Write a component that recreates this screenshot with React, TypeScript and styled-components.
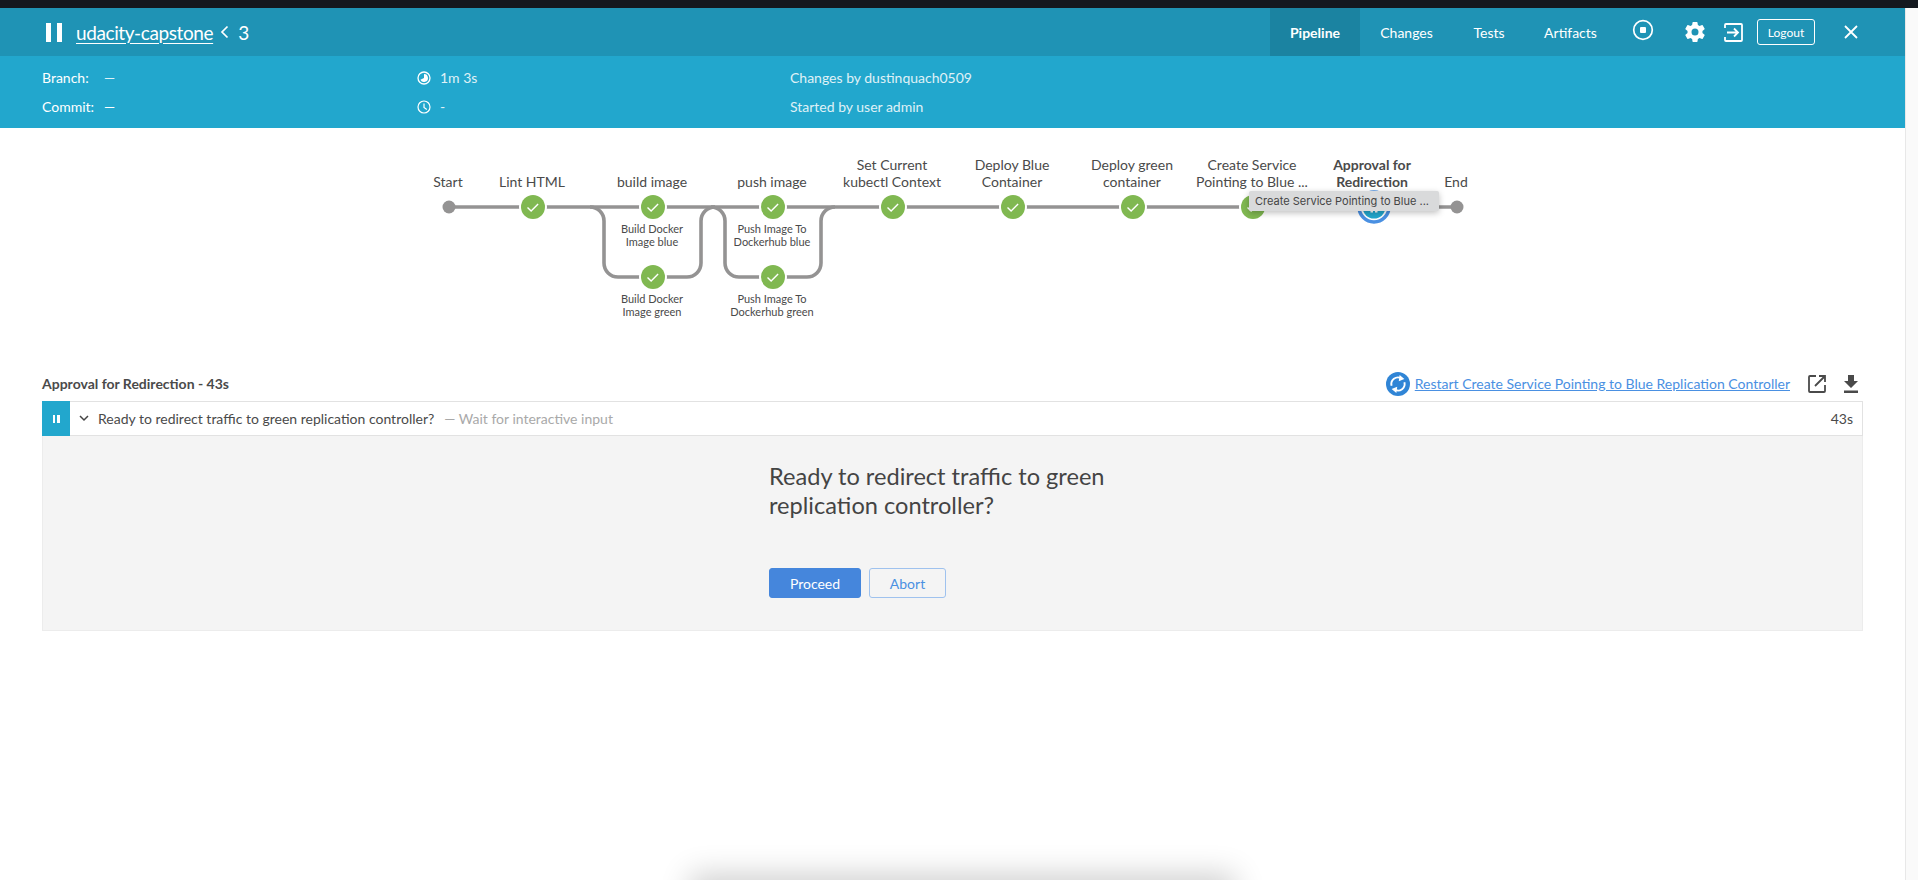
import React from "react";
import styled, { createGlobalStyle } from "styled-components";

const GlobalStyle = createGlobalStyle`
  html, body {
    margin: 0;
    padding: 0;
    height: 100%;
    background: #fff;
  }
  body {
    font-family: Lato, "Noto Sans", sans-serif;
    color: #4a4a4a;
    overflow: hidden;
  }
`;

const Page = styled.div`
  position: relative;
  width: 1918px;
  height: 880px;
  overflow: hidden;
  background: #fff;
  display: flex;
  flex-direction: column;
`;

const DesktopStrip = styled.div`
  height: 8px;
  flex: none;
  background: #14181f;
`;

const Main = styled.div`
  flex: 1;
  display: flex;
  min-height: 0;
`;

const Sheet = styled.div`
  width: 1905px;
  flex: none;
  display: flex;
  flex-direction: column;
`;

const ScrollGutter = styled.div`
  flex: 1;
  background: #fafafa;
  border-left: 1px solid #e8e8e8;
`;

const TopBar = styled.header`
  height: 48px;
  flex: none;
  background: #1f93b5;
  color: #fff;
  display: flex;
  align-items: stretch;
  padding-left: 46px;
`;

const Title = styled.div`
  display: flex;
  align-items: center;
  font-size: 19px;
  letter-spacing: -0.4px;
  flex: none;
  width: 1224px;
`;

const PauseGlyph = styled.span`
  display: inline-flex;
  gap: 6px;
  margin-right: 14px;
  i {
    display: block;
    width: 5px;
    height: 19px;
    background: #fff;
  }
`;

const TitleLink = styled.a`
  color: #fff;
  text-decoration: underline;
  text-underline-offset: 3px;
  text-decoration-thickness: 1px;
`;

const RunNumber = styled.span`
  display: inline-flex;
  align-items: center;
  gap: 9px;
  margin-left: 7px;
`;

const Tab = styled.a<{ $active?: boolean; $width: number }>`
  width: ${(p) => p.$width}px;
  flex: none;
  display: flex;
  align-items: center;
  justify-content: center;
  font-size: 14px;
  font-weight: ${(p) => (p.$active ? 700 : 400)};
  background: ${(p) => (p.$active ? "#1b83a1" : "transparent")};
`;

const Actions = styled.div`
  display: flex;
  align-items: center;
  margin-left: 16px;
`;

const IconSlot = styled.span<{ $ml: number; $up?: number }>`
  display: inline-flex;
  margin-left: ${(p) => p.$ml}px;
  margin-bottom: ${(p) => p.$up ?? 0}px;
`;

const LogoutButton = styled.a`
  width: 58px;
  height: 26px;
  box-sizing: border-box;
  margin-left: 14px;
  border: 1px solid #fff;
  border-radius: 3px;
  display: flex;
  align-items: center;
  justify-content: center;
  font-size: 12px;
`;

const InfoBar = styled.div`
  height: 72px;
  flex: none;
  background: #22a7cd;
  color: #fff;
  font-size: 14px;
  display: grid;
  grid-template-columns: 375px 373px 1fr;
  grid-template-rows: 29px 29px;
  align-content: center;
  padding-left: 42px;
`;

const InfoCell = styled.div`
  display: flex;
  align-items: center;
`;

const InfoKey = styled.span`
  width: 62px;
`;

const Dim = styled.span`
  opacity: 0.85;
`;

const InfoIcon = styled.span`
  display: inline-flex;
  margin-right: 9px;
`;

const GraphCanvas = styled.div`
  position: relative;
  height: 243px;
  flex: none;
`;

const GraphLines = styled.svg`
  position: absolute;
  left: 0;
  top: 0;
`;

const StageLabel = styled.div<{ $bold?: boolean }>`
  position: absolute;
  width: 112px;
  transform: translateX(-50%);
  text-align: center;
  font-size: 14px;
  line-height: 17px;
  color: #4a4a4a;
  font-weight: ${(p) => (p.$bold ? 700 : 400)};
`;

const SubLabel = styled.div`
  position: absolute;
  width: 92px;
  transform: translateX(-50%);
  text-align: center;
  font-size: 11px;
  line-height: 13px;
  color: #4a4a4a;
`;

const NodeTooltip = styled.div`
  position: absolute;
  left: 1249px;
  top: 63px;
  width: 190px;
  height: 20px;
  box-sizing: border-box;
  padding-left: 6px;
  border-radius: 2px;
  background: #d9dadb;
  box-shadow: 0 2px 6px rgba(0, 0, 0, 0.25);
  font-family: Inter, "Liberation Sans", sans-serif;
  font-size: 11px;
  line-height: 20px;
  color: #444;
  white-space: nowrap;
`;

const Details = styled.section`
  padding: 0 0 0 42px;
  width: 1821px;
`;

const DetailsHead = styled.div`
  display: flex;
  align-items: center;
  height: 25px;
`;

const StepTitle = styled.div`
  font-size: 14px;
  font-weight: 700;
  color: #4a4a4a;
  flex: 1;
`;

const RestartLink = styled.a`
  display: flex;
  align-items: center;
  color: #4a90e2;
  font-size: 14px;
  span {
    text-decoration: underline;
    margin-left: 5px;
  }
`;

const HeadIcon = styled.span<{ $ml: number; $mr?: number }>`
  display: inline-flex;
  margin-left: ${(p) => p.$ml}px;
  margin-right: ${(p) => p.$mr ?? 0}px;
`;

const StepRow = styled.div`
  margin-top: 5px;
  height: 35px;
  box-sizing: border-box;
  border: 1px solid #e2e2e2;
  border-left: 0;
  display: flex;
  align-items: center;
  background: #fff;
  font-size: 14px;
`;

const StepStatus = styled.div`
  width: 28px;
  height: 35px;
  flex: none;
  background: #22a7cd;
  display: flex;
  align-items: center;
  justify-content: center;
  gap: 2px;
  i {
    display: block;
    width: 2.5px;
    height: 8px;
    background: #fff;
  }
`;

const Chevron = styled.span`
  display: inline-flex;
  margin: 0 9px 0 9px;
`;

const StepHint = styled.span`
  color: #a9a9a9;
  margin-left: 10px;
  flex: 1;
`;

const StepTime = styled.span`
  margin-right: 9px;
`;

const InputPanel = styled.div`
  height: 195px;
  box-sizing: border-box;
  background: #f4f4f4;
  border: 1px solid #ececec;
  border-top: 0;
  padding: 26px 0 0 726px;
`;

const Question = styled.h1`
  margin: 0;
  width: 360px;
  font-size: 23.6px;
  line-height: 29px;
  font-weight: 400;
  color: #444;
`;

const ButtonRow = styled.div`
  display: flex;
  gap: 8px;
  margin-top: 48px;
`;

const PanelButton = styled.button<{ $primary?: boolean; $width: number }>`
  width: ${(p) => p.$width}px;
  height: 30px;
  box-sizing: border-box;
  border-radius: 3px;
  font-family: inherit;
  font-size: 14px;
  padding: 0;
  color: ${(p) => (p.$primary ? "#fff" : "#4a90e2")};
  background: ${(p) => (p.$primary ? "#4586dc" : "transparent")};
  border: 1px solid ${(p) => (p.$primary ? "#4586dc" : "#9fc2ee")};
`;

const BottomShadow = styled.div`
  position: absolute;
  left: 700px;
  bottom: -40px;
  width: 525px;
  height: 36px;
  box-shadow: 0 0 30px 10px rgba(0, 0, 0, 0.19);
`;

const Check = ({ x, y }: { x: number; y: number }) => (
  <path
    d={`M${x - 5.5} ${y + 0.5}l3.6 3.6l7-7.2`}
    fill="none"
    stroke="#fff"
    strokeWidth="1.4"
  />
);

const mainNodes = [533, 653, 773, 893, 1013, 1133, 1253];
const branchNodes = [653, 773];

const stages = [
  { x: 448, y: 45, text: "Start" },
  { x: 532, y: 45, text: "Lint HTML" },
  { x: 652, y: 45, text: "build image" },
  { x: 772, y: 45, text: "push image" },
  { x: 892, y: 28, text: "Set Current kubectl Context" },
  { x: 1012, y: 28, text: "Deploy Blue Container" },
  { x: 1132, y: 28, text: "Deploy green container" },
  { x: 1252, y: 28, text: "Create Service Pointing to Blue ..." },
  { x: 1372, y: 28, text: "Approval for Redirection", bold: true },
  { x: 1456, y: 45, text: "End" },
];

const subStages = [
  { x: 652, y: 94, text: "Build Docker Image blue" },
  { x: 652, y: 164, text: "Build Docker Image green" },
  { x: 772, y: 94, text: "Push Image To Dockerhub blue" },
  { x: 772, y: 164, text: "Push Image To Dockerhub green" },
];

function PipelineGraph() {
  return (
    <GraphCanvas>
      <GraphLines width="1905" height="243" viewBox="0 128 1905 243">
        <g fill="none" stroke="#949393" strokeWidth="3.6">
          <path d="M449 207H1457" />
          <path d="M590 207a14 14 0 0 1 14 14V263a14 14 0 0 0 14 14H687a14 14 0 0 0 14-14V221a14 14 0 0 1 14-14" />
          <path d="M711 207a14 14 0 0 1 14 14V263a14 14 0 0 0 14 14H807a14 14 0 0 0 14-14V221a14 14 0 0 1 14-14" />
        </g>
        <circle cx="449" cy="207" r="6.5" fill="#949393" />
        <circle cx="1457" cy="207" r="6.5" fill="#949393" />
        {mainNodes.map((x) => (
          <g key={x}>
            <circle cx={x} cy={207} r="14" fill="#fff" />
            <circle cx={x} cy={207} r="12" fill="#80b851" />
            <Check x={x} y={207} />
          </g>
        ))}
        {branchNodes.map((x) => (
          <g key={x}>
            <circle cx={x} cy={277} r="14" fill="#fff" />
            <circle cx={x} cy={277} r="12" fill="#80b851" />
            <Check x={x} y={277} />
          </g>
        ))}
        <circle cx="1374" cy="207" r="18.5" fill="#fff" />
        <circle cx="1374" cy="207" r="15" fill="#fff" stroke="#4a90e2" strokeWidth="3.5" />
        <circle cx="1374" cy="207" r="11.5" fill="#22a7cd" />
        <path d="M1370.5 202h2.5v10.5h-2.500zM1375 202h2.500v10.500h-2.500z" fill="#fff" />
      </GraphLines>
      {stages.map((s) => (
        <StageLabel key={s.text} $bold={s.bold} style={{ left: s.x, top: s.y }}>
          {s.text}
        </StageLabel>
      ))}
      {subStages.map((s) => (
        <SubLabel key={s.text} style={{ left: s.x, top: s.y }}>
          {s.text}
        </SubLabel>
      ))}
      <NodeTooltip>Create Service Pointing to Blue ...</NodeTooltip>
    </GraphCanvas>
  );
}

export default function App() {
  return (
    <Page>
      <GlobalStyle />
      <DesktopStrip />
      <Main>
        <Sheet>
          <TopBar>
            <Title>
              <PauseGlyph>
                <i />
                <i />
              </PauseGlyph>
              <TitleLink>udacity-capstone</TitleLink>
              <RunNumber>
                <svg width="9" height="14" viewBox="0 0 9 14">
                  <path d="M7.5 1.5L2 7l5.5 5.5" fill="none" stroke="#fff" strokeWidth="1.7" />
                </svg>
                3
              </RunNumber>
            </Title>
            <Tab $active $width={90}>Pipeline</Tab>
            <Tab $width={93}>Changes</Tab>
            <Tab $width={72}>Tests</Tab>
            <Tab $width={91}>Artifacts</Tab>
            <Actions>
              <IconSlot $ml={0} $up={4}>
                <svg width="22" height="22" viewBox="0 0 22 22">
                  <circle cx="11" cy="11" r="9.3" fill="none" stroke="#fff" strokeWidth="1.7" />
                  <rect x="8" y="8" width="6" height="6" rx="1" fill="#fff" />
                </svg>
              </IconSlot>
              <IconSlot $ml={29}>
                <svg width="24" height="24" viewBox="0 0 24 24" fill="#fff">
                  <path d="M19.43 12.98c.04-.32.07-.64.07-.98s-.03-.66-.07-.98l2.11-1.65a.5.5 0 0 0 .12-.64l-2-3.46a.5.5 0 0 0-.61-.22l-2.49 1a7.3 7.3 0 0 0-1.69-.98l-.38-2.65A.49.49 0 0 0 14 2h-4a.49.49 0 0 0-.49.42l-.38 2.65c-.61.25-1.17.59-1.69.98l-2.49-1a.49.49 0 0 0-.61.22l-2 3.46a.49.49 0 0 0 .12.64l2.11 1.65c-.04.32-.07.65-.07.98s.03.66.07.98l-2.11 1.65a.5.5 0 0 0-.12.64l2 3.46c.12.22.39.3.61.22l2.49-1c.52.4 1.08.73 1.69.98l.38 2.65c.03.24.24.42.49.42h4c.25 0 .46-.18.49-.42l.38-2.65c.61-.25 1.17-.59 1.69-.98l2.49 1c.23.09.49 0 .61-.22l2-3.46a.5.5 0 0 0-.12-.64l-2.11-1.65zM12 15.5a3.5 3.5 0 1 1 0-7 3.5 3.5 0 0 1 0 7z" />
                </svg>
              </IconSlot>
              <IconSlot $ml={17}>
                <svg width="19" height="19" viewBox="0 0 19 19" fill="none" stroke="#fff" strokeWidth="1.8">
                  <path d="M1 5V2a1 1 0 0 1 1-1h15a1 1 0 0 1 1 1v15a1 1 0 0 1-1 1H2a1 1 0 0 1-1-1v-3" />
                  <path d="M3 9.5h11M10 5.5l4 4-4 4" />
                </svg>
              </IconSlot>
              <LogoutButton>Logout</LogoutButton>
              <IconSlot $ml={28}>
                <svg width="16" height="16" viewBox="0 0 16 16">
                  <path d="M2 2l12 12M14 2L2 14" fill="none" stroke="#fff" strokeWidth="1.8" />
                </svg>
              </IconSlot>
            </Actions>
          </TopBar>
          <InfoBar>
            <InfoCell>
              <InfoKey>Branch:</InfoKey>
              <Dim>—</Dim>
            </InfoCell>
            <InfoCell>
              <InfoIcon>
                <svg width="14" height="14" viewBox="0 0 14 14">
                  <circle cx="7" cy="7" r="6" fill="none" stroke="#fff" strokeWidth="1.3" />
                  <path d="M7 7V3a4 4 0 1 1-3.6 5.8z" fill="#fff" />
                </svg>
              </InfoIcon>
              <Dim>1m 3s</Dim>
            </InfoCell>
            <InfoCell>
              <Dim>Changes by dustinquach0509</Dim>
            </InfoCell>
            <InfoCell>
              <InfoKey>Commit:</InfoKey>
              <span>—</span>
            </InfoCell>
            <InfoCell>
              <InfoIcon>
                <svg width="14" height="14" viewBox="0 0 14 14" fill="none" stroke="#fff" strokeWidth="1.2">
                  <circle cx="7" cy="7" r="6" />
                  <path d="M7 3.5V7.5l2.8 2" />
                </svg>
              </InfoIcon>
              <Dim>-</Dim>
            </InfoCell>
            <InfoCell>
              <Dim>Started by user admin</Dim>
            </InfoCell>
          </InfoBar>
          <PipelineGraph />
          <Details>
            <DetailsHead>
              <StepTitle>Approval for Redirection - 43s</StepTitle>
              <RestartLink>
                <svg width="24" height="24" viewBox="0 0 24 24">
                  <circle cx="12" cy="12" r="12" fill="#3085d6" />
                  <g>
                    <path d="M5.6 13.8A6.6 6.6 0 0 1 15.2 6.3" fill="none" stroke="#fff" strokeWidth="1.9" />
                    <path d="M13.6 3l4.8 3.9-5.6 2.3z" fill="#fff" />
                  </g>
                  <g transform="rotate(180 12 12)">
                    <path d="M5.6 13.8A6.6 6.6 0 0 1 15.2 6.3" fill="none" stroke="#fff" strokeWidth="1.9" />
                    <path d="M13.6 3l4.8 3.9-5.6 2.3z" fill="#fff" />
                  </g>
                </svg>
                <span>Restart Create Service Pointing to Blue Replication Controller</span>
              </RestartLink>
              <HeadIcon $ml={18}>
                <svg width="18" height="18" viewBox="0 0 18 18" fill="none" stroke="#4a4a4a" strokeWidth="1.8">
                  <path d="M8 1H2a1 1 0 0 0-1 1v14a1 1 0 0 0 1 1h14a1 1 0 0 0 1-1v-6" />
                  <path d="M11 1h6v6M17 1L7 11" />
                </svg>
              </HeadIcon>
              <HeadIcon $ml={18} $mr={5}>
                <svg width="14" height="18" viewBox="0 0 14 18" fill="#4a4a4a">
                  <path d="M4 0h6v6h4l-7 7-7-7h4zM0 15.5h14V18H0z" />
                </svg>
              </HeadIcon>
            </DetailsHead>
            <StepRow>
              <StepStatus>
                <i />
                <i />
              </StepStatus>
              <Chevron>
                <svg width="10" height="7" viewBox="0 0 10 7">
                  <path d="M1 1l4 4 4-4" fill="none" stroke="#444" strokeWidth="1.5" />
                </svg>
              </Chevron>
              Ready to redirect traffic to green replication controller?
              <StepHint>— Wait for interactive input</StepHint>
              <StepTime>43s</StepTime>
            </StepRow>
            <InputPanel>
              <Question>Ready to redirect traffic to green replication controller?</Question>
              <ButtonRow>
                <PanelButton $primary $width={92}>Proceed</PanelButton>
                <PanelButton $width={77}>Abort</PanelButton>
              </ButtonRow>
            </InputPanel>
          </Details>
        </Sheet>
        <ScrollGutter />
      </Main>
      <BottomShadow />
    </Page>
  );
}
